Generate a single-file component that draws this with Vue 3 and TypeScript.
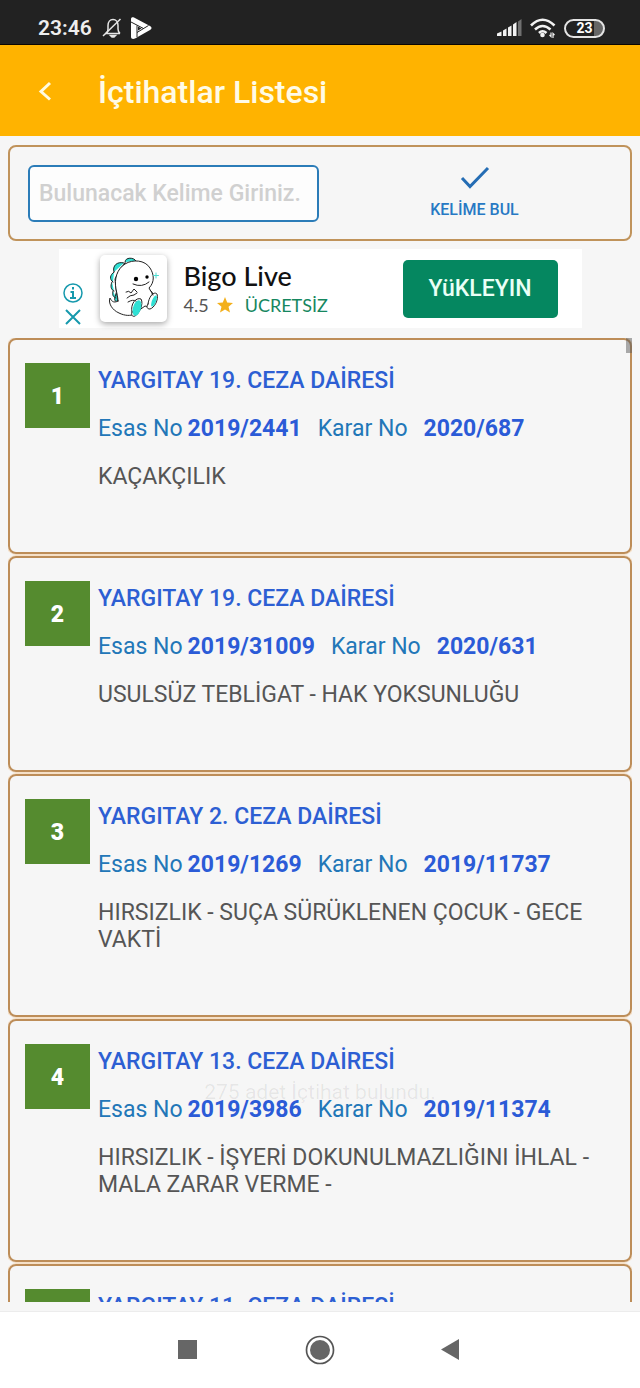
<script setup lang="ts">
import { ref } from 'vue'

interface Ruling {
  court: string
  esas: string
  karar: string
  subject: string
}

const query = ref<string>('')

const rulings: Ruling[] = [
  { court: 'YARGITAY 19. CEZA DAİRESİ', esas: '2019/2441', karar: '2020/687', subject: 'KAÇAKÇILIK' },
  { court: 'YARGITAY 19. CEZA DAİRESİ', esas: '2019/31009', karar: '2020/631', subject: 'USULSÜZ TEBLİGAT - HAK YOKSUNLUĞU' },
  { court: 'YARGITAY 2. CEZA DAİRESİ', esas: '2019/1269', karar: '2019/11737', subject: 'HIRSIZLIK - SUÇA SÜRÜKLENEN ÇOCUK - GECE VAKTİ' },
  { court: 'YARGITAY 13. CEZA DAİRESİ', esas: '2019/3986', karar: '2019/11374', subject: 'HIRSIZLIK - İŞYERİ DOKUNULMAZLIĞINI İHLAL - MALA ZARAR VERME -' },
  { court: 'YARGITAY 11. CEZA DAİRESİ', esas: '', karar: '', subject: '' },
]
</script>

<template>
  <div class="app">
    <div class="status">
      <span class="time">23:46</span>
      <svg class="bell" width="20" height="20" viewBox="0 0 20 20" fill="none" stroke="#e6e6e6" stroke-width="1.5">
        <path d="M3 15.5h15M4.500 15c1-1 1.500-2 1.500-4V7.500C6 4 8 1.500 11 1.500s5 2.500 5 6V11c0 2 .5 3 2 4.500" />
        <path d="M1 18L18.500 1" />
        <path d="M8.500 17.500h5l-1.500 1.500h-2z" fill="#e6e6e6" />
      </svg>
      <svg width="21" height="22" viewBox="0 0 21 22">
        <path d="M0 2C0 .3 1.500-.2 3 .5L19 9c2 1 2 3 0 4L4 21.500c-2 1-4 .3-4-1.500z" fill="#fff" />
        <path d="M0 5L12.500 11.500M6 8.500V20M6 15.500L17.500 8.500" stroke="#222" stroke-width="1" fill="none" />
        <path d="M7 9.500l3.500 2L7 13.500z" fill="#222" />
      </svg>
      <span class="spacer"></span>
      <svg width="26" height="18" viewBox="0 0 26 18" fill="#f2f2f2">
        <path d="M0 14.500l4.500-2V17H0zM6 11.500l3.500-2V17H6zM11 8.500l3.500-2V17H11zM16 5.500l3.500-2.500v14H16z" />
        <path d="M21 2.500L24.500 0v17H21z" fill="#707070" />
      </svg>
      <svg class="wifi" width="26" height="21" viewBox="0 0 26 21" fill="none" stroke="#f2f2f2" stroke-width="2.600">
        <path d="M1 7.500Q12.500-4 24.500 7.500M5 11.500q7.500-7 15.500 0M9 15q3.500-3.500 7.500 0" />
        <circle cx="12.500" cy="17" r="2.300" fill="#f2f2f2" stroke="none" />
        <path d="M21 14.500v4l-1.500-1.500M23 20v-4.500l1.500 1.500" stroke-width="1.200" />
      </svg>
      <span class="battery">23</span>
    </div>

    <header class="bar">
      <button class="back" type="button" aria-label="Geri">
        <svg width="14" height="20" viewBox="0 0 14 20" fill="none" stroke="#fffbe0" stroke-width="3">
          <path d="M12 2L3 10.500L12 18.500" />
        </svg>
      </button>
      <h1>İçtihatlar Listesi</h1>
    </header>

    <main class="content">
      <form class="search" @submit.prevent>
        <input v-model="query" type="text" placeholder="Bulunacak Kelime Giriniz." aria-label="Bulunacak Kelime" />
        <button class="find" type="submit">
          <svg width="30" height="24" viewBox="0 0 30 24" fill="none" stroke="#256db4" stroke-width="3">
            <path d="M2 12L10 20.500L28 2" />
          </svg>
          <span>KELİME BUL</span>
        </button>
      </form>

      <aside class="ad">
        <div class="marks">
          <button type="button" aria-label="Bilgi">
            <svg width="20" height="20" viewBox="0 0 20 20" fill="none" stroke="#1699ad">
              <circle cx="10" cy="10" r="9" stroke-width="1.500" />
              <path d="M10 4v2.500M7.500 9H10v6M7 15h6" stroke-width="2" />
            </svg>
          </button>
          <button type="button" aria-label="Kapat">
            <svg width="20" height="20" viewBox="0 0 20 20" fill="none" stroke="#1699ad" stroke-width="2">
              <path d="M3 3L17 17M17 3L3 17" />
            </svg>
          </button>
        </div>
        <div class="logo">
          <svg width="66" height="66" viewBox="0 0 66 66" fill="none" stroke="#222" stroke-width="1" stroke-linecap="round" stroke-linejoin="round">
            <path fill="#2fe0d4" d="M25 7C25 2 34 2 36 6M24 8c-7-2-12 3-10 9M14 17c-4 3-5 7-1 10M12 27c-2 4-1 8 2 9M13 36c-1 4 0 6 3 7M15 42c-1 3 0 5 3 4L16 34L15 24L20 14L25 8z" />
            <path fill="#fff" d="M18 46C13 49 11 45 10 43C8 48 12 55 19 58C25 61 31 61 34 59L45 51C50 53 54 49 52 38L49 33C55 27 54 19 50 13C45 5 33 4 25 9C17 14 14 24 16 34C17 39 18 43 18 46z" />
            <path fill="#fff" d="M32 57C30 49 36 42 41 44C44 49 39 59 35 61C32 62 31 60 32 57zM48 49C49 41 54 36 57 39C59 45 54 53 50 54C47 54 46 52 48 49z" />
            <ellipse cx="37" cy="53" rx="4" ry="8" transform="rotate(16 37 53)" fill="#2fe0d4" stroke="none" />
            <ellipse cx="54" cy="46" rx="2" ry="6" transform="rotate(22 54 46)" fill="#2fe0d4" stroke="none" />
            <path d="M33 29Q42 33 49 27M26 37q3-2 5 1l3-4 3 3M27 43q3-3 7-3l3-2M28 47q5-3 8-1M50 35q3 2 3 5" />
            <circle cx="36" cy="24" r="2.200" fill="#000" stroke="none" />
            <circle cx="47" cy="22" r="1.700" fill="#000" stroke="none" />
            <path d="M56 18v5M53.500 20.500h5" stroke="#4adbd0" />
          </svg>
        </div>
        <div class="adtext">
          <div class="adname">Bigo Live</div>
          <div class="adinfo">
            <span>4.5</span>
            <svg width="16" height="16" viewBox="0 0 16 16" fill="#f3b01c">
              <path d="M8 0l2.200 5.600 5.800.4-4.500 3.700L13 15.500 8 12.400 3 15.500l1.500-5.800L0 6l5.800-.4z" />
            </svg>
            <span class="free">ÜCRETSİZ</span>
          </div>
        </div>
        <button class="install" type="button">YüKLEYIN</button>
      </aside>

      <div class="results">
        <ol class="list">
          <li v-for="(item, i) in rulings" :key="i" class="card">
            <span class="badge">{{ i + 1 }}</span>
            <div class="body">
              <h2>{{ item.court }}</h2>
              <p v-if="item.esas" class="numbers">
                <span class="esas">Esas No</span><b>{{ item.esas }}</b>
                <span class="karar">Karar No</span><b>{{ item.karar }}</b>
              </p>
              <p class="subject">{{ item.subject }}</p>
            </div>
          </li>
        </ol>
        <span class="thumb"></span>
      </div>
    </main>

    <div class="toast" role="status">275 adet İçtihat bulundu.</div>

    <nav class="nav">
      <button type="button" aria-label="Son uygulamalar">
        <svg width="32" height="32" viewBox="0 0 32 32"><path d="M6 6h19v19H6z" fill="#666" /></svg>
      </button>
      <button type="button" aria-label="Ana ekran">
        <svg width="32" height="32" viewBox="0 0 32 32">
          <circle cx="16" cy="16" r="13.500" fill="none" stroke="#555" stroke-width="1.700" />
          <circle cx="16" cy="16" r="10" fill="#666" />
        </svg>
      </button>
      <button type="button" aria-label="Geri">
        <svg width="32" height="32" viewBox="0 0 32 32"><path d="M5 15.500L23 5v21z" fill="#666" /></svg>
      </button>
    </nav>
  </div>
</template>

<style>
body {
  margin: 0;
}
</style>

<style scoped>
.app {
  position: relative;
  display: flex;
  flex-direction: column;
  height: 100vh;
  background: #f6f6f6;
  font-family: Roboto, "Liberation Sans", sans-serif;
  color: #555;
}
.app * {
  box-sizing: border-box;
}
button {
  margin: 0;
  padding: 0;
  border: 0;
  background: none;
  font: inherit;
  display: flex;
  align-items: center;
  justify-content: center;
}
svg {
  display: block;
  flex: none;
}
.status {
  display: flex;
  align-items: center;
  flex: none;
  height: 45px;
  padding: 12px 35px 0 38px;
  background: #222;
  border-bottom: 1px solid #0c0600;
}
.time {
  font-size: 21px;
  font-weight: 600;
  color: #eee;
}
.bell {
  margin: 0 9px 0 10px;
}
.spacer {
  flex: 1;
}
.wifi {
  margin: 0 8px 0 7px;
}
.battery {
  width: 41px;
  height: 19px;
  border: 2px solid #e4e4e4;
  border-radius: 10px;
  background: linear-gradient(90deg, transparent 75%, #666 75%);
  font-size: 14px;
  font-weight: 700;
  line-height: 15px;
  text-align: center;
  color: #fff;
}
.bar {
  display: flex;
  align-items: center;
  flex: none;
  height: 91px;
  padding-left: 25px;
  background: #ffb300;
}
.back {
  width: 40px;
  height: 48px;
}
h1 {
  margin: 3px 0 0 33px;
  font-size: 32px;
  line-height: 40px;
  font-weight: 500;
  color: #fffbe6;
}
.content {
  display: flex;
  flex-direction: column;
  flex: 1;
  min-height: 0;
  padding: 9px 8px;
}
.search {
  display: flex;
  align-items: center;
  flex: none;
  height: 96px;
  padding-left: 18px;
  border: 2px solid #c0935b;
  border-radius: 8px;
}
.search input {
  width: 291px;
  height: 57px;
  padding: 0 9px;
  border: 2px solid #2b7cb8;
  border-radius: 6px;
  background: #fdfdfd;
  font: 500 23px Roboto, "Liberation Sans", sans-serif;
  color: #444;
}
.search input::placeholder {
  color: #d0d0d0;
  opacity: 1;
}
.find {
  flex: 1;
  flex-direction: column;
  gap: 10px;
  font-size: 16px;
  font-weight: 500;
  line-height: 20px;
  color: #2779c4;
}
.ad {
  display: flex;
  align-items: center;
  align-self: center;
  flex: none;
  width: 523px;
  height: 79px;
  margin: 8px 0 10px;
  padding: 0 24px 0 4px;
  background: #fff;
}
.marks {
  display: flex;
  flex-direction: column;
  align-self: flex-end;
  gap: 4px;
  padding-bottom: 1px;
}
.logo {
  width: 67px;
  height: 67px;
  margin-left: 17px;
  border-radius: 5px;
  background: #fff;
  box-shadow: 0 2px 6px rgba(0, 0, 0, 0.35);
}
.adtext {
  flex: 1;
  margin-left: 17px;
}
.adname {
  font: 500 27px/32px Lato, sans-serif;
  color: #111;
}
.adinfo {
  display: flex;
  align-items: center;
  gap: 8px;
  font: 18px/26px Lato, sans-serif;
}
.free {
  margin-left: 4px;
  color: #16875f;
}
.install {
  width: 155px;
  height: 58px;
  border-radius: 5px;
  background: #058760;
  font-size: 23px;
  font-weight: 500;
  color: #e9fff6;
}
.results {
  position: relative;
  flex: 1;
  min-height: 0;
  overflow: hidden;
}
.list {
  display: flex;
  flex-direction: column;
  gap: 2px;
  margin: 0;
  padding: 0;
  list-style: none;
}
.card {
  display: flex;
  align-items: flex-start;
  gap: 8px;
  padding: 23px 25px 62px 15px;
  border: 2px solid #bd8d58;
  border-radius: 8px;
  box-shadow: 0 0 0 1px #f5e0c8;
}
.badge {
  flex: none;
  width: 65px;
  height: 65px;
  background: #558b2f;
  font-size: 23px;
  font-weight: 900;
  line-height: 67px;
  text-align: center;
  color: #fff;
}
.body {
  display: flex;
  flex-direction: column;
  gap: 21px;
  padding-top: 4px;
  font-size: 23px;
  line-height: 27px;
}
h2,
p {
  margin: 0;
  font-size: 23px;
}
h2 {
  font-weight: 500;
  color: #2d5fd3;
}
.numbers {
  display: flex;
  color: #2277b8;
}
.numbers b {
  color: #2b5bd7;
}
.esas {
  margin-right: 5px;
}
.karar {
  margin: 0 16px;
}
.thumb {
  position: absolute;
  top: 0;
  right: 0;
  width: 6px;
  height: 15px;
  background: rgba(90, 90, 90, 0.5);
}
.toast {
  position: absolute;
  top: 1079px;
  left: 0;
  right: 0;
  font-size: 21px;
  line-height: 27px;
  text-align: center;
  color: rgba(0, 0, 0, 0.07);
  pointer-events: none;
}
.nav {
  display: flex;
  align-items: center;
  justify-content: center;
  gap: 100px;
  flex: none;
  height: 77px;
  border-top: 1px solid #ececec;
  background: #fff;
}
</style>
